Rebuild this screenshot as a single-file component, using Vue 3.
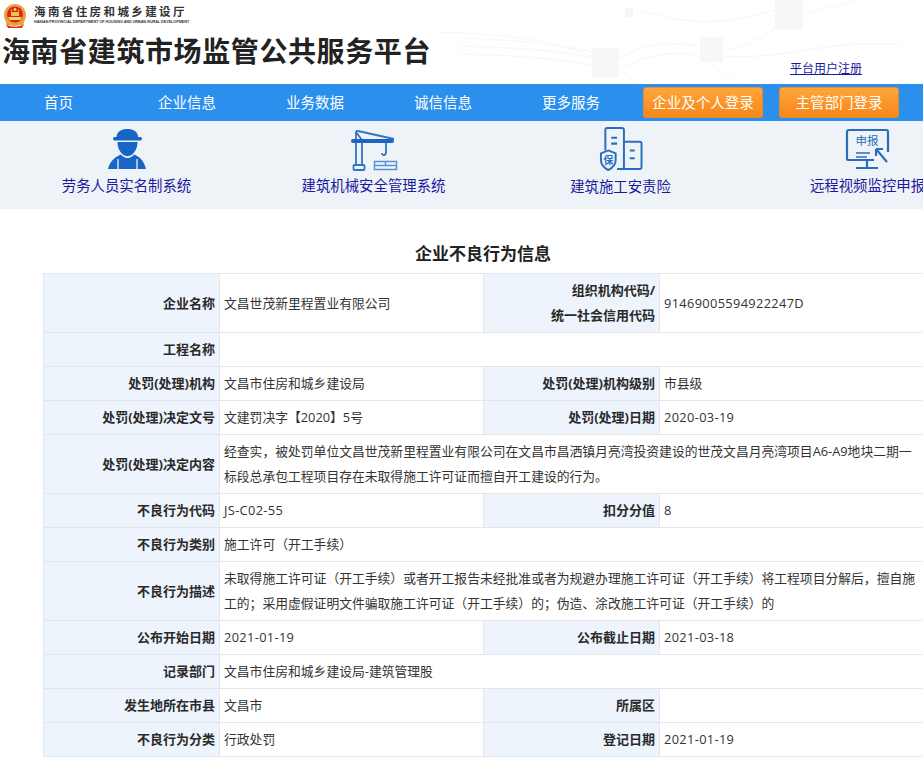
<template>
  <div class="page">
    <header class="site-head">
      <svg class="head-decor" width="966" height="84" viewBox="0 0 966 84" aria-hidden="true">
        <g fill="none" stroke="#f6f6f6" stroke-width="1">
          <path d="M440 32 C500 34 560 40 600 60" />
          <path d="M460 38 C520 40 570 46 592 52 L640 84" />
          <path d="M460 46 C520 48 560 50 592 58" />
          <path d="M460 54 C520 56 560 58 592 66" />
          <path d="M618 60 C650 38 680 44 700 46" />
          <path d="M620 68 C660 50 680 52 700 56 L740 84" />
          <path d="M723 50 C760 46 780 20 803 14 L860 0" />
          <path d="M723 56 C790 60 820 40 900 44" />
          <path d="M640 10 C700 30 740 20 775 10" />
        </g>
        <g fill="#f7f7f7">
          <rect x="592" y="48" width="27" height="29" />
          <rect x="700" y="37" width="23" height="25" />
          <rect x="775" y="0" width="28" height="30" />
          <rect x="625" y="8" width="8" height="9" />
        </g>
      </svg>
      <div class="brand">
        <div class="dept">
          <svg class="emblem" width="24" height="26" viewBox="0 0 24 26" aria-hidden="true">
            <circle cx="12" cy="12" r="11" fill="#e9a13c" />
            <circle cx="12" cy="11.500" r="8" fill="#d8261c" />
            <path d="M5 14 H19 L17.500 17 H6.500 Z" fill="#f3d25c" />
            <path d="M8 9 H16 V13 H8 Z" fill="#f0c24a" />
            <circle cx="12" cy="6.500" r="1.400" fill="#f7dc6a" />
            <circle cx="8.500" cy="7.500" r=".8" fill="#f7dc6a" />
            <circle cx="15.500" cy="7.500" r=".8" fill="#f7dc6a" />
            <path d="M3 21 C8 24.500 16 24.500 21 21 L19 25 H5 Z" fill="#d8341f" />
            <path d="M2 17 C5 22 19 22 22 17 L20 22 H4 Z" fill="#e8a037" />
          </svg>
          <div>
            <div class="dept-cn">海南省住房和城乡建设厅</div>
            <div class="dept-en">HAINAN PROVINCIAL DEPARTMENT OF HOUSING AND URBAN-RURAL DEVELOPMENT</div>
          </div>
        </div>
        <div class="site-name">海南省建筑市场监管公共服务平台</div>
      </div>
      <a class="register" href="#">平台用户注册</a>
    </header>

    <nav class="main-nav">
      <a v-for="item in navItems" :key="item" class="nav-link" href="#">{{ item }}</a>
      <a v-for="item in loginItems" :key="item" class="login-btn" href="#">{{ item }}</a>
    </nav>

    <div class="systems">
      <a class="system" href="#">
        <svg width="40" height="42" viewBox="0 0 40 42">
          <g fill="#1766c5">
            <path d="M9.500 9 C9.500 3.500 15 1 20.500 1 C26 1 31 3.500 31 9 Z" />
            <rect x="6" y="9" width="29" height="3.500" rx="1.700" />
            <path d="M10.500 14 H30.500 C30.500 20 28 24.500 24.500 27 C22.500 28.500 18.500 28.500 16.500 27 C13 24.500 10.500 20 10.500 14 Z" />
            <path d="M14 26.500 C8 29 3 33 1 41 H39 C37 33 33 29 27 26.500 C24 31 17 31 14 26.500 Z" />
          </g>
          <path d="M11 31 V41 M30 31 V41" stroke="#eef3f7" stroke-width="1.300" fill="none" />
        </svg>
        <span class="system-name">劳务人员实名制系统</span>
      </a>
      <a class="system" href="#">
        <svg width="50" height="42" viewBox="0 0 50 42">
          <g fill="none" stroke="#2f74c6" stroke-width="1.800">
            <path d="M7 12 V4 Q7 2.500 9 3 L45 11" />
            <path d="M7 15 V37 M13 15 V37 M13 12 L7 4" />
            <rect x="4.500" y="37" width="11" height="5" rx="1" />
            <path d="M37 14 V24 C37 28 33 28 33 25" />
            <rect x="25.500" y="33.500" width="22" height="8" stroke="#5b92d3" stroke-width="1.500" />
            <path d="M25.500 37.500 H47.500 M36.500 33.500 V37.500" stroke="#5b92d3" stroke-width="1.500" />
          </g>
          <rect x="2" y="11" width="43" height="4" rx="2" fill="#1d66c0" />
        </svg>
        <span class="system-name">建筑机械安全管理系统</span>
      </a>
      <a class="system" href="#">
        <svg width="46" height="45" viewBox="0 0 46 45">
          <g fill="none" stroke="#2a6dc0" stroke-width="2">
            <path d="M7 24 V3 Q7 1 9 1 H24 Q26 1 26 3 V43 H19" />
            <path d="M26 15 H42 Q44 15 44 17 V41 Q44 43 42 43 H26" />
            <path d="M13 11 H19 M13 17 H19 M32 24 H37 M32 32 H37" stroke-width="2.200" />
            <path d="M10 24 L17.500 27 V34 C17.500 39 14 42 10 44 C6 42 2.500 39 2.500 34 V27 Z" fill="#eef3f7" />
          </g>
          <text x="10" y="38" class="shield-text">保</text>
        </svg>
        <span class="system-name lower">建筑施工安责险</span>
      </a>
      <a class="system" href="#">
        <svg width="46" height="42" viewBox="0 0 46 42">
          <g fill="none" stroke="#2a6dc0" stroke-width="2.200">
            <path d="M29 32 H3 Q2 32 2 31 V4 Q2 2 4 2 H41 Q43 2 43 4 V24" />
            <path d="M22 33 V39 M11 40 H33" />
            <path d="M11 25 H25 M11 29 H22" stroke-width="1.600" />
            <path d="M31 21 L42 34 M31 21 H38 M31 21 V28" />
          </g>
          <text x="22" y="17" class="screen-text">申报</text>
        </svg>
        <span class="system-name">远程视频监控申报</span>
      </a>
    </div>

    <h1 class="info-title">企业不良行为信息</h1>

    <table class="info-table">
      <colgroup>
        <col class="col-label" />
        <col class="col-value" />
        <col class="col-label-b" />
        <col class="col-value-b" />
      </colgroup>
      <tbody>
        <tr v-for="(row, i) in rows" :key="i">
          <template v-for="(cell, j) in row" :key="j">
            <th v-if="j % 2 === 0">
              <template v-if="Array.isArray(cell)">{{ cell[0] }}<br />{{ cell[1] }}</template>
              <template v-else>{{ cell }}</template>
            </th>
            <td v-else :colspan="row.length === 2 ? 3 : 1" :class="{ num: isCode(cell) }">{{ cell }}</td>
          </template>
        </tr>
      </tbody>
    </table>
  </div>
</template>

<script setup>
const navItems = ['首页', '企业信息', '业务数据', '诚信信息', '更多服务']
const loginItems = ['企业及个人登录', '主管部门登录']

const rows = [
  ['企业名称', '文昌世茂新里程置业有限公司', ['组织机构代码/', '统一社会信用代码'], '91469005594922247D'],
  ['工程名称', ''],
  ['处罚(处理)机构', '文昌市住房和城乡建设局', '处罚(处理)机构级别', '市县级'],
  ['处罚(处理)决定文号', '文建罚决字【2020】5号', '处罚(处理)日期', '2020-03-19'],
  ['处罚(处理)决定内容', '经查实，被处罚单位文昌世茂新里程置业有限公司在文昌市昌洒镇月亮湾投资建设的世茂文昌月亮湾项目A6-A9地块二期一标段总承包工程项目存在未取得施工许可证而擅自开工建设的行为。'],
  ['不良行为代码', 'JS-C02-55', '扣分分值', '8'],
  ['不良行为类别', '施工许可（开工手续）'],
  ['不良行为描述', '未取得施工许可证（开工手续）或者开工报告未经批准或者为规避办理施工许可证（开工手续）将工程项目分解后，擅自施工的；采用虚假证明文件骗取施工许可证（开工手续）的；伪造、涂改施工许可证（开工手续）的'],
  ['公布开始日期', '2021-01-19', '公布截止日期', '2021-03-18'],
  ['记录部门', '文昌市住房和城乡建设局-建筑管理股'],
  ['发生地所在市县', '文昌市', '所属区', ''],
  ['不良行为分类', '行政处罚', '登记日期', '2021-01-19'],
]

// 代码和日期的字距比中文略宽
const isCode = (text) => /^[0-9A-Z-]+$/.test(text)
</script>

<style>
html,
body {
  margin: 0;
  background: #fff;
  overflow-x: hidden;
}
</style>

<style scoped>
.page {
  width: 966px;
  font-family: "Open Sans", "Noto Sans CJK SC", sans-serif;
  color: #333;
}

a {
  text-decoration: none;
}

.site-head {
  position: relative;
  height: 84px;
  display: flex;
  justify-content: space-between;
  align-items: flex-end;
  overflow: hidden;
}

.head-decor {
  position: absolute;
  top: 0;
  left: 0;
}

.brand {
  position: relative;
  align-self: flex-start;
}

.dept {
  display: flex;
  gap: 7px;
  padding: 3px 0 0 3px;
  height: 31px;
  box-sizing: border-box;
}

.emblem {
  display: block;
}

.dept-cn {
  font-size: 11.5px;
  font-weight: 700;
  letter-spacing: 2.4px;
  line-height: 16px;
  margin-top: 1px;
  color: #333;
}

.dept-en {
  font-family: "Liberation Sans", sans-serif;
  font-size: 3.7px;
  font-weight: 700;
  line-height: 5px;
  color: #333;
  white-space: nowrap;
}

.site-name {
  padding-left: 2px;
  font-size: 28px;
  font-weight: 700;
  letter-spacing: 0.6px;
  line-height: 40px;
  color: #222;
  white-space: nowrap;
}

.register {
  position: relative;
  margin: 0 104px 7px 0;
  font-size: 12px;
  line-height: 16px;
  color: #1a1a9e;
  text-decoration: underline;
}

.main-nav {
  height: 37px;
  padding-left: 44px;
  display: flex;
  align-items: center;
  background: #2b8fee;
}

.nav-link {
  margin: 0 70px 2px 0;
  font-size: 14.5px;
  color: #fff;
  white-space: nowrap;
}

.nav-link:first-child {
  margin-right: 85px;
}

.nav-link:nth-child(5) {
  margin-right: 43px;
}

.login-btn {
  box-sizing: border-box;
  width: 120px;
  height: 31px;
  margin-right: 16px;
  padding-bottom: 2px;
  display: flex;
  align-items: center;
  justify-content: center;
  font-size: 14.5px;
  color: #fff;
  white-space: nowrap;
  background: linear-gradient(#ffa63a, #f7861b);
  border: 1px solid #e98a24;
  border-radius: 3px;
}

.systems {
  height: 88px;
  padding-left: 3px;
  display: flex;
  background: #eef3f7;
  overflow: hidden;
}

.system {
  flex: 0 0 247px;
  padding-top: 6px;
  box-sizing: border-box;
  display: flex;
  flex-direction: column;
  align-items: center;
}

.system svg {
  height: 44px;
  flex: none;
}

.system-name {
  margin-top: 4px;
  font-size: 14.4px;
  line-height: 22px;
  color: #1a1a9e;
  white-space: nowrap;
}

.system-name.lower {
  margin-top: 5px;
}

.shield-text {
  font-size: 10px;
  font-weight: 700;
  fill: #2a6dc0;
  text-anchor: middle;
}

.screen-text {
  font-size: 11.5px;
  fill: #2a6dc0;
  text-anchor: middle;
}

.info-title {
  margin: 0;
  padding: 33px 0 7px;
  font-size: 17px;
  font-weight: 700;
  line-height: 24px;
  text-align: center;
  color: #222;
}

.info-table {
  width: 880px;
  margin-left: 43px;
  table-layout: fixed;
  border-collapse: collapse;
  font-size: 13px;
  line-height: 25px;
}

.col-label {
  width: 176px;
}

.col-value {
  width: 264px;
}

.col-label-b {
  width: 176px;
}

.col-value-b {
  width: 264px;
}

th,
td {
  border: 1px solid #e4e7ea;
  padding: 4px;
}

th {
  text-align: right;
  font-weight: 700;
  color: #2a2a2a;
  background: #edf4fb;
}

td {
  text-align: left;
  font-size: 12.8px;
  color: #333;
}

td.num {
  letter-spacing: 0.35px;
}
</style>
